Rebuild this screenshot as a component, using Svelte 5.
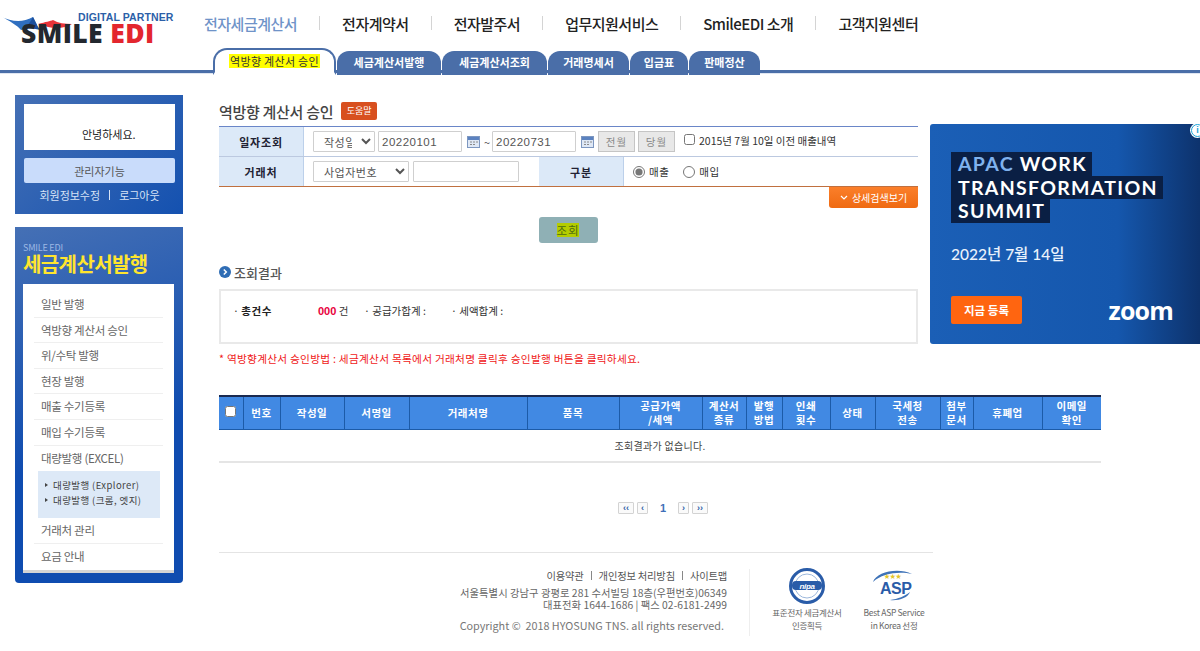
<script lang="ts">
  const nav = ['전자계약서', '전자발주서', '업무지원서비스', 'SmileEDI 소개', '고객지원센터'];
  const tabs = [
    { label: '세금계산서발행', width: 104 },
    { label: '세금계산서조회', width: 105 },
    { label: '거래명세서', width: 81 },
    { label: '입금표', width: 58 },
    { label: '판매정산', width: 71 }
  ];
  const menuTop = ['일반 발행', '역방향 계산서 승인', '위/수탁 발행', '현장 발행', '매출 수기등록', '매입 수기등록', '대량발행 (EXCEL)'];
  const menuBottom = ['거래처 관리', '요금 안내'];
  const columns = [
    { width: 37, label: ['번호'] },
    { width: 64, label: ['작성일'] },
    { width: 65, label: ['서명일'] },
    { width: 118, label: ['거래처명'] },
    { width: 92, label: ['품목'] },
    { width: 83, label: ['공급가액', '/세액'] },
    { width: 44, label: ['계산서', '종류'] },
    { width: 36, label: ['발행', '방법'] },
    { width: 48, label: ['인쇄', '횟수'] },
    { width: 45, label: ['상태'] },
    { width: 65, label: ['국세청', '전송'] },
    { width: 33, label: ['첨부', '문서'] },
    { width: 69, label: ['휴폐업'] },
    { width: 59, label: ['이메일', '확인'] }
  ];
</script>

<div class="page">
  <header class="header">
    <div class="top">
      <div class="logo">
        <svg class="swoosh" width="120" height="24" viewBox="0 0 120 24">
          <path d="M0 8 C12 14 22 15 33 9 L37 17 C30 20 26 21 21 22 C18 18 10 13 0 8Z" fill="#2f6fc0" />
          <path d="M33 9 L37 17 L40 22 C36 21 28 20 21 22 C27 18 31 14 33 9Z" fill="#1c4f9c" />
          <path d="M38 16 C46 14 50 13 53 12 C58 15 65 16 72 16 C66 20 56 21 48 19 C45 18 41 17 38 16Z" fill="#e8343a" />
        </svg>
        <span class="partner">DIGITAL PARTNER</span>
        <div class="brand">SMILE <em>EDI</em></div>
      </div>
      <nav class="nav">
        <a href="#top" class="current">전자세금계산서</a>
        {#each nav as item}
          <i></i>
          <a href="#top">{item}</a>
        {/each}
      </nav>
    </div>
    <div class="tabs">
      <div class="tab-active"><span>역방향 계산서 승인</span></div>
      {#each tabs as tab}
        <div class="tab" style="width: {tab.width}px">{tab.label}</div>
      {/each}
    </div>
  </header>

  <div class="body">
    <aside class="side">
      <section class="user">
        <div class="hello">안녕하세요.</div>
        <button class="admin">관리자기능</button>
        <div class="links"><span>회원정보수정</span><b></b><span>로그아웃</span></div>
      </section>
      <section class="menu">
        <div class="menu-sub">SMILE EDI</div>
        <div class="menu-title">세금계산서발행</div>
        <div class="menu-panel">
          <ul>
            {#each menuTop as item}
              <li>{item}</li>
            {/each}
          </ul>
          <div class="submenu">
            <div>대량발행 (Explorer)</div>
            <div>대량발행 (크롬, 엣지)</div>
          </div>
          <ul class="after">
            {#each menuBottom as item}
              <li>{item}</li>
            {/each}
          </ul>
        </div>
      </section>
    </aside>

    <main class="main">
      <div class="title-row">
        <h1>역방향 계산서 승인</h1>
        <span class="help">도움말</span>
      </div>

      <div class="search">
        <div class="row">
          <div class="th first">일자조회</div>
          <div class="td">
            <select class="sel-date"><option>작성일</option></select>
            <input class="date" value="20220101" />
            <svg class="cal" width="13" height="12" viewBox="0 0 13 12"><rect x=".5" y=".5" width="12" height="11" fill="#dfe8f5" stroke="#7d97c0" /><rect x="1" y="1" width="11" height="3" fill="#5b82c0" /><path d="M3 6h2M6 6h2M9 6h2M3 8.500h2M6 8.500h2" stroke="#8a8a8a" /></svg>
            <span class="tilde">~</span>
            <input class="date" value="20220731" />
            <svg class="cal" width="13" height="12" viewBox="0 0 13 12"><rect x=".5" y=".5" width="12" height="11" fill="#dfe8f5" stroke="#7d97c0" /><rect x="1" y="1" width="11" height="3" fill="#5b82c0" /><path d="M3 6h2M6 6h2M9 6h2M3 8.500h2M6 8.500h2" stroke="#8a8a8a" /></svg>
            <button class="gray">전월</button>
            <button class="gray">당월</button>
            <label class="old"><input type="checkbox" />2015년 7월 10일 이전 매출내역</label>
          </div>
        </div>
        <div class="row last">
          <div class="th first">거래처</div>
          <div class="td biz">
            <select class="sel-biz"><option>사업자번호</option></select>
            <input class="biz-no" />
          </div>
          <div class="th kind">구분</div>
          <div class="td radios">
            <label><input type="radio" name="kind" checked />매출</label>
            <label><input type="radio" name="kind" />매입</label>
          </div>
        </div>
      </div>

      <div class="detail-row">
        <button class="detail">
          <svg width="8" height="5" viewBox="0 0 8 5"><path d="M1 1l3 3 3-3" fill="none" stroke="#fff" stroke-width="1.200" /></svg>
          상세검색보기
        </button>
      </div>
      <div class="search-row">
        <button class="go"><span>조회</span></button>
      </div>

      <h2 class="result-title">
        <svg width="12" height="12" viewBox="0 0 12 12"><circle cx="6" cy="6" r="6" fill="#2f6db5" /><path d="M4.800 3.500L7.300 6 4.800 8.500" fill="none" stroke="#fff" stroke-width="1.500" /></svg>
        조회결과
      </h2>
      <div class="summary">
        <span class="sum total">· <b>총건수</b></span>
        <span class="sum count"><em>000</em> 건</span>
        <span class="sum supply">· 공급가합계 :</span>
        <span class="sum tax">· 세액합계 :</span>
      </div>
      <p class="note">* 역방향계산서 승인방법 : 세금계산서 목록에서 거래처명 클릭후 승인발행 버튼을 클릭하세요.</p>

      <table class="grid">
        <colgroup>
          <col style="width: 24px" />
          {#each columns as col}
            <col style="width: {col.width}px" />
          {/each}
        </colgroup>
        <thead>
          <tr>
            <th><input type="checkbox" /></th>
            {#each columns as col}
              <th>{#each col.label as line}<div>{line}</div>{/each}</th>
            {/each}
          </tr>
        </thead>
        <tbody>
          <tr><td colspan="15">조회결과가 없습니다.</td></tr>
        </tbody>
      </table>

      <div class="pager">
        <button class="wide">‹‹</button>
        <button>‹</button>
        <strong>1</strong>
        <button>›</button>
        <button class="wide">››</button>
      </div>

      <footer class="footer">
        <div class="foot-text">
          <div class="foot-links"><span>이용약관</span><b></b><span>개인정보 처리방침</span><b></b><span>사이트맵</span></div>
          <div class="addr">서울특별시 강남구 광평로 281 수서빌딩 18층(우편번호)06349</div>
          <div class="addr">대표전화 1644-1686 | 팩스 02-6181-2499</div>
          <div class="copy">Copyright ©&nbsp; 2018 HYOSUNG TNS. all rights reserved.</div>
        </div>
        <div class="badges">
          <div class="badge">
            <svg width="36" height="36" viewBox="0 0 36 36">
              <circle cx="18" cy="18" r="16.500" fill="#fff" stroke="#2a5ca8" stroke-width="3" />
              <circle cx="18" cy="18" r="12" fill="#fff" stroke="#9db8dc" />
              <rect x="3" y="13" width="30" height="9" rx="4" fill="#2a5ca8" />
              <text x="18" y="20.500" text-anchor="middle" class="nipa">nipa</text>
            </svg>
            <div>표준전자 세금계산서<br />인증획득</div>
          </div>
          <div class="badge asp">
            <svg width="48" height="36" viewBox="0 0 48 36">
              <path d="M3 14C6 4 28 -1 42 6 30 3 12 5 3 14Z" fill="#3f73b8" />
              <path d="M40 24C38 30 28 33 20 32 28 31 35 28 40 24Z" fill="#3f73b8" />
              <text x="14" y="10" class="stars">★★★</text>
              <text x="10" y="26" class="asp-t">ASP</text>
            </svg>
            <div>Best ASP Service<br />in Korea 선정</div>
          </div>
        </div>
      </footer>
    </main>

    <aside class="ad">
      <div class="ad-icons">
        <span class="ad-i">i</span>
        <span class="ad-x">✕</span>
      </div>
      <div class="ad-head">
        <div><span class="apac">APAC</span> WORK</div>
        <div>TRANSFORMATION</div>
        <div>SUMMIT</div>
      </div>
      <div class="ad-date">2022년 7월 14일</div>
      <div class="ad-bottom">
        <span class="ad-cta">지금 등록</span>
        <span class="zoom">zoom</span>
      </div>
    </aside>
  </div>
</div>

<style>
  :global(body) {
    margin: 0;
    background: #fff;
    font-family: 'Noto Sans CJK KR', 'Liberation Sans', sans-serif;
    color: #333;
    overflow: hidden;
  }

  .page {
    width: 1200px;
    height: 651px;
    overflow: hidden;
  }

  /* header */
  .header {
    height: 73px;
    border-bottom: 3px solid #4a6ea8;
    box-shadow: 0 1px 0 #dfe6f2;
    box-sizing: content-box;
    height: 70px;
  }

  .top {
    display: flex;
    height: 46px;
  }

  .logo {
    position: relative;
    width: 204px;
    flex-shrink: 0;
  }

  .swoosh {
    position: absolute;
    left: 0;
    top: 8px;
  }

  .partner {
    position: absolute;
    left: 78px;
    top: 11px;
    font: 700 10.5px 'Liberation Sans', sans-serif;
    color: #2c5fa8;
    white-space: nowrap;
    letter-spacing: 0.1px;
  }

  .brand {
    position: absolute;
    left: 21px;
    top: 20px;
    font: 900 27px/26px 'Open Sans', 'Liberation Sans', sans-serif;
    color: #23282f;
    white-space: nowrap;
    letter-spacing: 0.4px;
    transform: scaleX(0.98);
    transform-origin: left;
  }

  .brand em {
    font-style: normal;
    color: #e3262e;
  }

  .nav {
    display: flex;
    align-items: center;
    height: 46px;
    gap: 22px;
  }

  .nav a {
    font-size: 15px;
    font-weight: 500;
    letter-spacing: -0.5px;
    color: #222;
    text-decoration: none;
    white-space: nowrap;
  }

  .nav a.current {
    color: #6f93c8;
  }

  .nav i {
    width: 1px;
    height: 14px;
    background: #d4d4d4;
  }

  .tabs {
    display: flex;
    height: 24px;
    padding-left: 213px;
    align-items: flex-end;
    margin-top: 2px;
  }

  .tab-active {
    width: 123px;
    height: 27px;
    box-sizing: border-box;
    border: 2px solid #4a6ea8;
    border-bottom: 3px solid #fff;
    border-radius: 14px 14px 0 0;
    margin-bottom: -3px;
    background: #fff;
    display: flex;
    align-items: center;
    justify-content: center;
    flex-shrink: 0;
    margin-right: 1px;
  }

  .tab-active span {
    background: #ffff00;
    font-size: 11px;
    line-height: 14px;
    padding: 0 1px;
    color: #333;
    letter-spacing: 0.3px;
    white-space: nowrap;
  }

  .tab {
    height: 24px;
    margin-bottom: -3px;
    padding-bottom: 3px;
    box-sizing: border-box;
    background: #4a6ea8;
    border-radius: 12px 12px 0 0;
    color: #fff;
    font-size: 11px;
    font-weight: 700;
    display: flex;
    align-items: center;
    justify-content: center;
    white-space: nowrap;
    flex-shrink: 0;
    margin-right: 1px;
  }

  /* layout */
  .body {
    display: grid;
    grid-template-columns: 168px 699px 265px;
    column-gap: 36px;
    padding: 22px 0 0 15px;
    align-items: start;
  }

  /* sidebar */
  .side {
    display: flex;
    flex-direction: column;
    gap: 13px;
  }

  .user,
  .menu {
    background: linear-gradient(135deg, #4570b5, #1451b0);
  }

  .user {
    height: 119px;
    box-sizing: border-box;
    padding: 9px 8px 0 9px;
  }

  .hello {
    height: 46px;
    background: #fff;
    color: #222;
    font-size: 11px;
    box-sizing: border-box;
    padding: 23px 0 0 58px;
    line-height: 14px;
  }

  .admin {
    display: block;
    width: 100%;
    height: 25px;
    margin-top: 8px;
    padding: 0;
    border: 0;
    border-radius: 2px;
    background: #c9dcfb;
    color: #555;
    font: 11px 'Noto Sans CJK KR', sans-serif;
  }

  .links {
    display: flex;
    justify-content: center;
    align-items: center;
    gap: 9px;
    margin-top: 4px;
    height: 14px;
    color: #d7e3f6;
    font-size: 11px;
    padding-top: 1px;
  }

  .links b {
    width: 1px;
    height: 10px;
    background: #d7e3f6;
  }

  .menu {
    height: 356px;
    box-sizing: border-box;
    padding: 15px 9px 10px 8px;
    border-radius: 0 0 4px 4px;
    background: linear-gradient(160deg, #4570b5, #0f4cb0 60%);
  }

  .menu-sub {
    font-size: 9px;
    line-height: 11px;
    color: #9db9e4;
    letter-spacing: -0.2px;
  }

  .menu-title {
    font-size: 20px;
    font-weight: 700;
    line-height: 22px;
    color: #ffe52e;
    letter-spacing: -0.6px;
    margin-bottom: 9px;
    white-space: nowrap;
  }

  .menu-panel {
    background: #fff;
    height: 289px;
    box-sizing: border-box;
    border-bottom: 3px solid #d4d4d4;
    padding: 8px 11px 0 11px;
  }

  ul {
    list-style: none;
    margin: 0;
    padding: 0;
  }

  li {
    height: 25.600px;
    box-sizing: border-box;
    line-height: 25px;
    border-bottom: 1px solid #efefef;
    font-size: 11.500px;
    letter-spacing: -0.3px;
    color: #666;
    padding-left: 7px;
  }

  ul li:last-child {
    border-bottom: 0;
  }

  .after li:first-child {
    border-bottom: 1px solid #efefef;
  }

  .submenu {
    margin: 0 3px 0 4px;
    height: 47px;
    box-sizing: border-box;
    background: #dde9f7;
    padding: 7px 0 0 15px;
    font-size: 9.500px;
    line-height: 15px;
    color: #444;
    letter-spacing: 0.4px;
  }

  .submenu div {
    position: relative;
    white-space: nowrap;
  }

  .submenu div::before {
    content: '';
    position: absolute;
    left: -8px;
    top: 5px;
    border-left: 3px solid #444;
    border-top: 2.500px solid transparent;
    border-bottom: 2.500px solid transparent;
  }

  /* main */
  .main {
    min-width: 0;
  }

  .title-row {
    display: flex;
    align-items: center;
    gap: 8px;
    height: 26px;
    margin-top: 3px;
  }

  h1 {
    margin: 0;
    font-size: 15px;
    font-weight: 500;
    letter-spacing: -0.3px;
    color: #444;
  }

  .help {
    width: 36px;
    height: 18px;
    background: #d8501f;
    color: #fff;
    border-radius: 2px;
    font-size: 9px;
    line-height: 18px;
    text-align: center;
  }

  .search {
    border-top: 1px solid #6a86c8;
    border-bottom: 1px solid #c0703f;
    margin-top: 2px;
  }

  .row {
    display: flex;
    height: 30px;
    border-bottom: 1px solid #bcc9e0;
    box-sizing: border-box;
  }

  .row.last {
    border-bottom: 0;
    height: 29px;
  }

  .th {
    display: flex;
    align-items: center;
    justify-content: center;
    background: #dce9f8;
    font-size: 11px;
    font-weight: 700;
    color: #223;
    letter-spacing: 0.8px;
    flex-shrink: 0;
  }

  .th.first {
    width: 84px;
    border-right: 1px solid #bcd0ea;
  }

  .td {
    display: flex;
    align-items: center;
    padding-left: 9px;
  }

  select,
  input.date,
  input.biz-no {
    box-sizing: border-box;
    height: 21px;
    border: 1px solid #cfcfcf;
    border-radius: 1px;
    background: #fff;
    color: #555;
    font: 11px 'Noto Sans CJK KR', sans-serif;
    padding: 0 6px;
    margin: 0;
    letter-spacing: 0.5px;
  }

  .sel-date {
    width: 62px;
  }

  .sel-biz {
    width: 96px;
  }

  input.date {
    width: 84px;
    margin-left: 3px;
    padding: 0 3px;
    font: 11.500px 'Liberation Sans', sans-serif;
  }

  .cal {
    margin-left: 5px;
  }

  .tilde {
    width: 16px;
    text-align: center;
    margin-left: -1px;
    margin-right: -3px;
    font-size: 11px;
    color: #555;
  }

  .tilde + .date {
    margin-left: 0;
  }

  .gray {
    width: 37px;
    height: 21px;
    padding: 0;
    margin-left: 4px;
    border: 1px solid #c5c5c5;
    background: #e8e8e8;
    color: #888;
    font: 10.500px 'Noto Sans CJK KR', sans-serif;
    letter-spacing: 1px;
  }

  .gray + .gray {
    margin-left: 3px;
  }

  .old {
    display: flex;
    align-items: center;
    margin-left: 9px;
    font-size: 10.500px;
    color: #333;
    white-space: nowrap;
    letter-spacing: 0;
    position: relative;
    top: -1px;
  }

  .old input {
    margin: 0 4px 2px 0;
    width: 11px;
    height: 11px;
  }

  .biz {
    width: 235px;
    box-sizing: border-box;
    flex-shrink: 0;
  }

  input.biz-no {
    width: 106px;
    margin-left: 4px;
  }

  .th.kind {
    width: 84px;
    border-right: 1px solid #bcd0ea;
  }

  .radios {
    gap: 14px;
    font-size: 10.500px;
    color: #333;
  }

  .radios label {
    display: flex;
    align-items: center;
    white-space: nowrap;
    letter-spacing: 0.5px;
  }

  .radios input {
    margin: 0 4px 0 0;
    width: 12px;
    height: 12px;
    accent-color: #777;
  }

  .detail-row {
    display: flex;
    justify-content: flex-end;
  }

  .detail {
    width: 89px;
    height: 21px;
    padding: 0;
    border: 0;
    border-radius: 0 0 3px 3px;
    background: linear-gradient(#fb7f2a, #ef6a12);
    color: #fff;
    font: 10px 'Noto Sans CJK KR', sans-serif;
    display: flex;
    align-items: center;
    justify-content: center;
    gap: 4px;
    white-space: nowrap;
  }

  .search-row {
    display: flex;
    justify-content: center;
    margin-top: 9px;
    padding-right: 1px;
  }

  .go {
    width: 59px;
    height: 26px;
    padding: 0;
    border: 0;
    border-radius: 3px;
    background: #8fb0b5;
    font: 11.500px 'Noto Sans CJK KR', sans-serif;
  }

  .go span {
    background: #b4cc00;
    color: #4d6a10;
    letter-spacing: 0.8px;
    line-height: 14px;
    display: inline-block;
  }

  .result-title {
    display: flex;
    align-items: center;
    gap: 3px;
    margin: 19px 0 0;
    height: 20px;
    font-size: 13px;
    font-weight: 500;
    color: #555;
  }

  .summary {
    position: relative;
    height: 55px;
    box-sizing: border-box;
    margin-top: 7px;
    border: 2px solid #e9e9e9;
    font-size: 10.500px;
    color: #333;
    padding: 12px 0 0 12px;
    display: flex;
    line-height: 15px;
    white-space: nowrap;
  }

  .sum b {
    font-weight: 700;
    color: #222;
    letter-spacing: 0.6px;
  }

  .total {
    width: 85px;
  }

  .count {
    width: 46px;
  }

  .count em {
    color: #e8003c;
    font: 700 11px/15px 'Liberation Sans', sans-serif;
  }

  .supply {
    width: 87px;
  }

  .note {
    margin: 7px 0 0;
    font-size: 10.700px;
    line-height: 16px;
    color: #f01818;
    white-space: nowrap;
    letter-spacing: 0.25px;
  }

  .grid {
    width: 882px;
    margin-top: 28px;
    border-collapse: collapse;
    table-layout: fixed;
    border-top: 2px solid #1a2a50;
  }

  .grid th {
    height: 32px;
    padding: 0;
    background: #4189e3;
    color: #fff;
    border-right: 1px solid #1c5ba8;
    border-bottom: 1px solid #1c5ba8;
    font-size: 10.500px;
    font-weight: 700;
    line-height: 14px;
    letter-spacing: 0.5px;
    white-space: nowrap;
  }

  .grid th:last-child {
    border-right: 0;
  }

  .grid th input {
    margin: 0 0 3px;
    width: 11px;
    height: 11px;
  }

  .grid td {
    height: 31px;
    padding: 0;
    border-bottom: 2px solid #e5e5e5;
    text-align: center;
    font-size: 10px;
    color: #444;
    letter-spacing: 0.3px;
  }

  .pager {
    display: flex;
    align-items: center;
    gap: 3px;
    margin: 38px 0 0 399px;
    width: 90px;
    height: 14px;
  }

  .pager button {
    width: 11px;
    height: 12px;
    padding: 0;
    border: 1px solid #d3d3d3;
    border-radius: 1px;
    background: #fafafa;
    color: #2f5ea8;
    font: 700 9px/8px 'Liberation Sans', sans-serif;
    flex-shrink: 0;
  }

  .pager button.wide {
    width: 16px;
  }

  .pager strong {
    width: 25px;
    text-align: center;
    font: 700 11px/12px 'Liberation Sans', sans-serif;
    color: #3f6fb8;
  }

  .footer {
    width: 714px;
    margin-top: 37px;
    border-top: 1px solid #e4e4e4;
    display: flex;
    box-sizing: border-box;
    padding-top: 16px;
  }

  .foot-text {
    width: 538px;
    height: 67px;
    box-sizing: border-box;
    padding-right: 22px;
    border-right: 1px solid #eee;
    text-align: right;
    font-size: 10.300px;
    color: #666;
    white-space: nowrap;
  }

  .foot-links {
    display: flex;
    justify-content: flex-end;
    align-items: center;
    gap: 7px;
    height: 12px;
    margin-bottom: 6px;
    letter-spacing: -0.2px;
    color: #555;
  }

  .foot-links b {
    width: 1px;
    height: 9px;
    background: #888;
  }

  .addr {
    line-height: 12px;
    letter-spacing: 0.05px;
  }

  .copy {
    margin-top: 7px;
    padding-right: 3px;
    line-height: 14px;
    font-size: 10.800px;
    color: #777;
  }

  .badges {
    display: flex;
    padding-left: 18px;
  }

  .badge {
    width: 78px;
    text-align: center;
    font-size: 8.500px;
    line-height: 13px;
    letter-spacing: -0.3px;
    color: #666;
    white-space: nowrap;
    display: flex;
    flex-direction: column;
    align-items: center;
    gap: 2px;
    margin-top: -1px;
  }

  .badge.asp {
    margin-left: 9px;
  }

  .nipa {
    font: italic 700 8px 'Liberation Sans', sans-serif;
    fill: #fff;
  }

  .stars {
    font-size: 6px;
    fill: #e5c62a;
  }

  .asp-t {
    font: 700 16px 'Liberation Sans', sans-serif;
    fill: #2a5ca8;
    letter-spacing: -0.5px;
  }

  /* ad */
  .ad {
    position: relative;
    height: 220px;
    margin: 29px 0 0 -24px;
    box-sizing: border-box;
    padding: 28px 0 0 21px;
    border-radius: 3px;
    background: linear-gradient(90deg, #1b5fb6 0%, #1557ad 65%, #0b2a5e 100%);
    color: #fff;
    overflow: hidden;
    font-family: Lato, 'Noto Sans CJK KR', sans-serif;
  }

  .ad-icons {
    position: absolute;
    right: 0;
    top: 0;
    display: flex;
    gap: 1px;
    height: 14px;
  }

  .ad-icons span {
    width: 14px;
    height: 14px;
    background: #fff;
    color: #1ba3d8;
    font: 700 10px/14px 'Liberation Sans', sans-serif;
    text-align: center;
  }

  .ad-icons .ad-i {
    width: 13px;
    height: 13px;
    border: 1px solid #1ba3d8;
    border-radius: 50%;
    box-sizing: border-box;
    line-height: 11px;
    background: #fff;
    font-size: 9px;
    box-shadow: 0 0 0 1px #fff;
  }

  .ad-head {
    display: flex;
    flex-direction: column;
    align-items: flex-start;
    font-weight: 700;
    font-size: 19.500px;
    line-height: 23.500px;
    letter-spacing: 1.3px;
    white-space: nowrap;
  }

  .ad-head div {
    background: #0a1f44;
    padding: 0 5px 0 7px;
  }

  .apac {
    color: #7fb2ee;
  }

  .ad-date {
    margin-top: 21px;
    font-size: 15.500px;
    line-height: 20px;
    font-weight: 500;
    color: #eaf2fc;
  }

  .ad-bottom {
    display: flex;
    align-items: center;
    justify-content: space-between;
    margin-top: 32px;
    width: 222px;
  }

  .ad-cta {
    width: 71px;
    height: 28px;
    background: #ff6510;
    border-radius: 2px;
    font-size: 11.500px;
    font-weight: 700;
    line-height: 28px;
    text-align: center;
    font-family: 'Noto Sans CJK KR', sans-serif;
  }

  .zoom {
    font: 700 25px/28px 'Open Sans', 'Liberation Sans', sans-serif;
    letter-spacing: -0.8px;
  }
</style>
